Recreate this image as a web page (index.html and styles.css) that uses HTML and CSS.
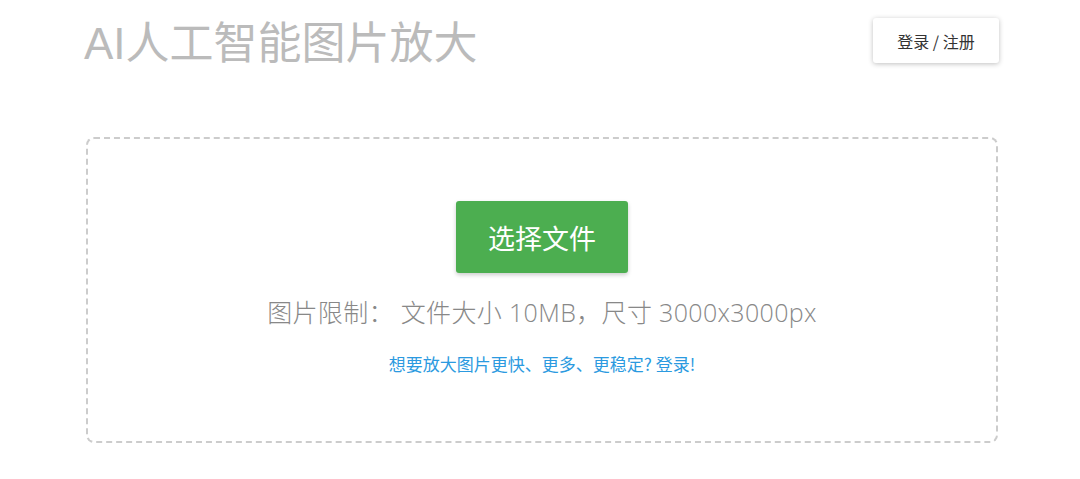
FILE: index.html
```html
<!DOCTYPE html>
<html lang="zh-CN">
<head>
    <meta charset="UTF-8">
    <meta name="viewport" content="width=device-width, initial-scale=1.0">
    <title>AI人工智能图片放大</title>
    <link rel="stylesheet" href="styles.css">
</head>
<body>

    <div class="page">
        <div class="header">
            <h1 class="title">AI人工智能图片放大</h1>
            <button class="login-btn">登录 / 注册</button>
        </div>

        <div class="upload-box">
            <button class="choose-btn">选择文件</button>
            <p class="limit">图片限制： 文件大小 10MB，尺寸 3000x3000px</p>
            <a href="#" class="login-tip">想要放大图片更快、更多、更稳定? 登录!</a>
        </div>
    </div>

</body>
</html>
```

FILE: styles.css
```css
body {
    font-family: "Liberation Sans", "Noto Sans CJK SC", sans-serif;
    margin: 0;
    padding: 0 0 0 4px;
    background-color: #fff;
}

.page {
    width: 912px;
    margin: 0 auto;
}

.header {
    display: flex;
    justify-content: space-between;
    align-items: flex-start;
    height: 137px;
}

.title {
    margin: 14px 0 0 -2px;
    font-size: 44px;
    font-weight: normal;
    line-height: 60px;
    color: #bbb;
}

.login-btn {
    margin-top: 18px;
    margin-right: -1px;
    width: 126px;
    height: 45px;
    background-color: #fff;
    border: none;
    border-radius: 3px;
    box-shadow: 0 1px 5px rgba(0, 0, 0, 0.25);
    font-family: "Noto Sans CJK SC", sans-serif;
    font-size: 16px;
    color: #333;
    cursor: pointer;
}

.upload-box {
    border: 2px dashed #ccc;
    border-radius: 8px;
    height: 306px;
    box-sizing: border-box;
    display: flex;
    flex-direction: column;
    align-items: center;
    padding-top: 62px;
}

.choose-btn {
    width: 172px;
    height: 72px;
    background-color: #4cae50;
    color: #fff;
    border: none;
    border-radius: 3px;
    box-shadow: 0 2px 4px rgba(0, 0, 0, 0.2);
    font-family: "Noto Sans CJK SC", sans-serif;
    font-size: 27px;
    cursor: pointer;
}

.limit {
    margin: 22px 0 0 0;
    font-family: "Open Sans", "Noto Sans CJK SC", sans-serif;
    font-size: 25px;
    font-weight: 300;
    line-height: 34px;
    letter-spacing: 0.35px;
    color: #888;
}

.login-tip {
    margin-top: 24px;
    font-family: "Noto Sans CJK SC", sans-serif;
    font-size: 17px;
    line-height: 22px;
    color: #2b9ae0;
    text-decoration: none;
}
```
